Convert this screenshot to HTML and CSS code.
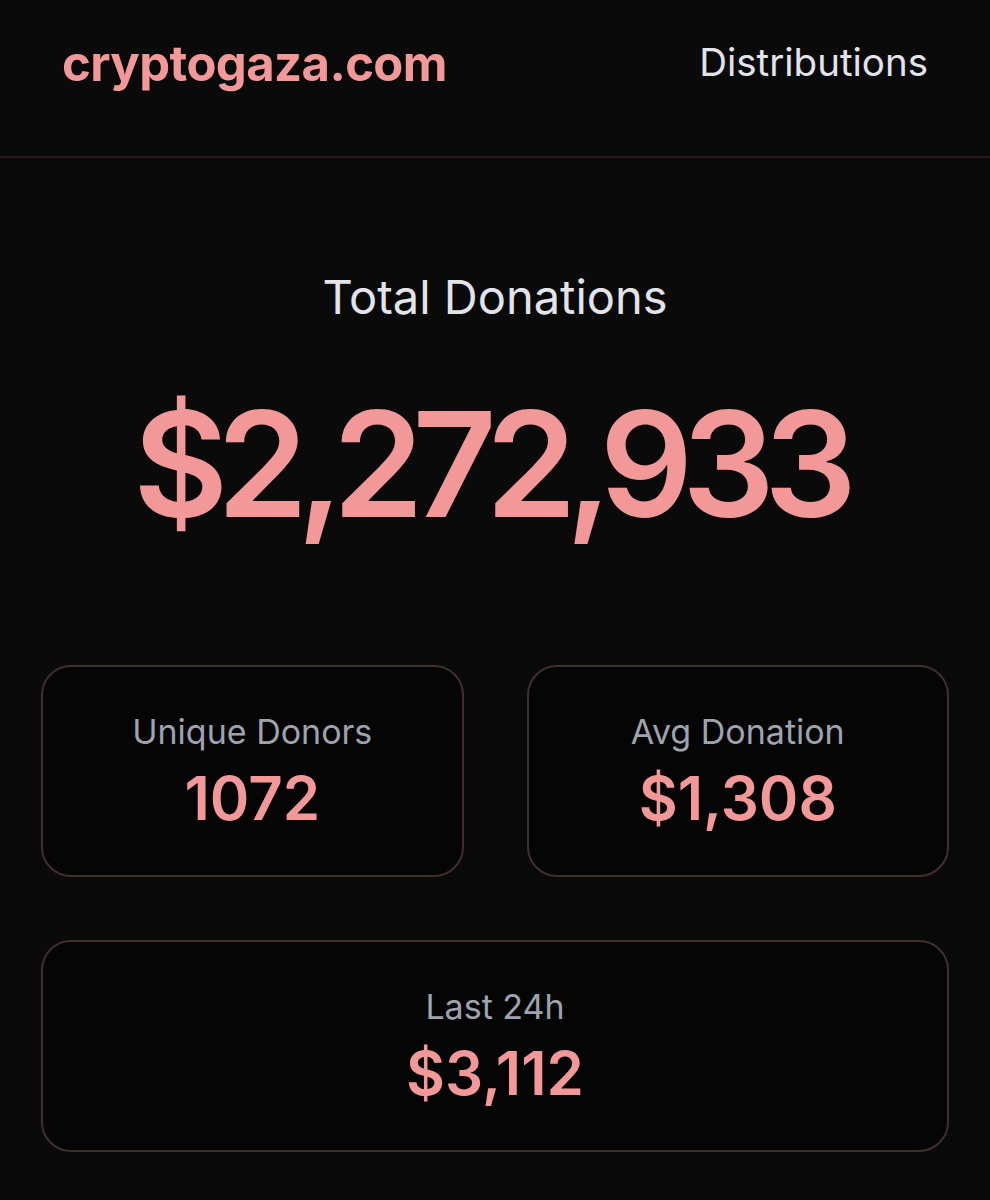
FILE: index.html
```html
<!DOCTYPE html>
<html lang="en">
<head>
<meta charset="UTF-8" />
<meta name="viewport" content="width=device-width, initial-scale=1" />
<title>cryptogaza.com</title>
<link rel="stylesheet" href="styles.css">
</head>
<body>

<header class="topbar">
  <a class="logo" href="#">cryptogaza.com</a>
  <a class="nav-link" href="#">Distributions</a>
</header>

<main class="content">
  <section class="total">
    <h2 class="total-label">Total Donations</h2>
    <div class="total-value">$2,272,933</div>
  </section>

  <section class="stats">
    <div class="stat">
      <div class="stat-label">Unique Donors</div>
      <div class="stat-value">1072</div>
    </div>
    <div class="stat">
      <div class="stat-label">Avg Donation</div>
      <div class="stat-value">$1,308</div>
    </div>
    <div class="stat stat-wide">
      <div class="stat-label">Last 24h</div>
      <div class="stat-value">$3,112</div>
    </div>
  </section>
</main>

</body>
</html>
```

FILE: styles.css
```css
body {
  margin: 0;
  background: #0a0a0a;
  color: #e5e7eb;
  font-family: Inter, "Noto Sans", sans-serif;
}
a {
  text-decoration: none;
}
.topbar {
  height: 158px;
  border-bottom: 2px solid #2a1a1c;
  display: flex;
  justify-content: space-between;
  align-items: flex-start;
  padding: 34px 62px 0 62px;
  box-sizing: border-box;
}
.logo {
  color: #f29898;
  font-size: 49px;
  font-weight: 700;
  letter-spacing: -0.6px;
}
.nav-link {
  color: #e2e4ea;
  font-size: 38.5px;
  padding-top: 5px;
}
.content {
  padding: 0 41px;
}
.total {
  text-align: center;
  padding-top: 110px;
}
.total-label {
  margin: 0;
  font-size: 47px;
  font-weight: 400;
  color: #e2e4ea;
}
.total-value {
  margin-top: 52px;
  font-size: 146px;
  font-weight: 600;
  line-height: 1.2;
  color: #f29898;
  letter-spacing: -11px;
  padding-right: 11px;
}
.stats {
  margin-top: 113px;
  display: grid;
  grid-template-columns: 1fr 1fr;
  gap: 63px 63px;
}
.stat {
  height: 212px;
  box-sizing: border-box;
  border: 2px solid #432e2e;
  border-radius: 30px;
  background: #050505;
  display: flex;
  flex-direction: column;
  align-items: center;
  padding-top: 44px;
}
.stat-wide {
  grid-column: 1 / 3;
}
.stat-label {
  font-size: 34px;
  color: #9ea3ae;
}
.stat-value {
  margin-top: 10px;
  font-size: 60px;
  font-weight: 600;
  color: #f29898;
}
```
